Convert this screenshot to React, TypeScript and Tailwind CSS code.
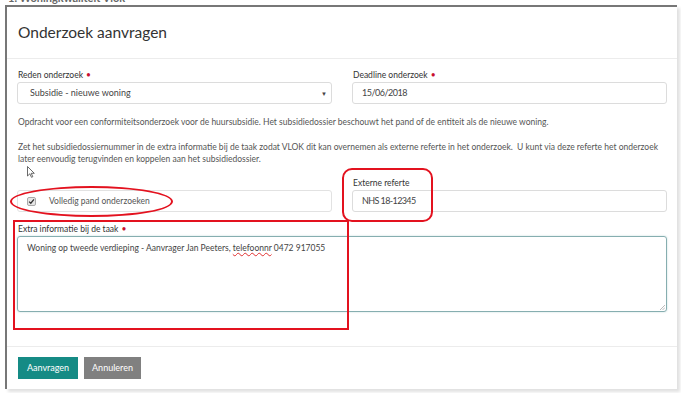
import React from "react";

const Req = () => <span className="ml-[3px] text-[#c8102e]">•</span>;

const App = () => {
  return (
    <div className="relative h-[393px] w-[681px] overflow-hidden bg-white font-['Lato',sans-serif] text-[#333]">
      {/* page behind the modal, mostly hidden */}
      <div className="h-[5px] overflow-hidden pl-[8px]">
        <div className="-mt-[8px] text-[11px] font-bold leading-[12px] text-[#666]">1. Woningkwaliteit Vlok</div>
      </div>

      <div className="ml-[5px] flex h-[384px] w-[672px] flex-col border-l-2 border-t-2 border-[#777] bg-white shadow-[3px_3px_3px_rgba(0,0,0,0.12)]">
        {/* Header */}
        <div className="flex h-[52px] items-center border-b border-[#ececec] pl-[11px]">
          <h2 className="text-[15.5px] text-[#333]">Onderzoek aanvragen</h2>
        </div>

        {/* Body */}
        <div className="flex flex-col px-[10px] pt-[10px]">
          <div className="grid grid-cols-2 gap-x-[20px]">
            <div className="flex flex-col">
              <label className="pl-[1px] text-[8.5px] leading-[12px] text-[#333]">
                Reden onderzoek<Req />
              </label>
              <div className="mt-[1px] flex h-[22px] items-center justify-between rounded-[3px] border border-[#dcdcdc] pl-[12px] pr-[4px] text-[9px] text-[#444]">
                <span>Subsidie - nieuwe woning</span>
                <span className="text-[6px] text-[#444]">▼</span>
              </div>
            </div>
            <div className="flex flex-col">
              <label className="pl-[1px] text-[8.5px] leading-[12px] text-[#333]">
                Deadline onderzoek<Req />
              </label>
              <div className="mt-[1px] flex h-[22px] items-center rounded-[3px] border border-[#dcdcdc] pl-[9px] text-[9px] tracking-[-0.5px] text-[#444]">
                15/06/2018
              </div>
            </div>
          </div>

          <p className="mt-[12px] whitespace-nowrap pl-[1px] text-[8.5px] leading-[12px] text-[#555]">
            Opdracht voor een conformiteitsonderzoek voor de huursubsidie. Het subsidiedossier beschouwt het pand of de entiteit als de nieuwe woning.
          </p>
          <p className="mt-[13px] whitespace-nowrap pl-[1px] text-[8.5px] leading-[12px] text-[#555]">
            Zet het subsidiedossiernummer in de extra informatie bij de taak zodat VLOK dit kan overnemen als externe referte in het onderzoek.&nbsp; U kunt via deze referte het onderzoek
            <br />
            later eenvoudig terugvinden en koppelen aan het subsidiedossier.
          </p>

          <div className="mt-[12px] grid grid-cols-2 gap-x-[20px]">
            <div className="flex flex-col justify-end">
              <div className="flex h-[22px] items-center rounded-[3px] border border-[#e2e2e2] pl-[9px] text-[8.5px] text-[#555]">
                <span className="flex h-[9px] w-[9px] items-center justify-center rounded-[2px] border border-[#aaa] bg-[#e6e6e6]">
                  <svg viewBox="0 0 10 10" className="h-[7px] w-[7px]">
                    <path d="M1.5 5.2 L4 7.5 L8.5 2" fill="none" stroke="#333" strokeWidth="1.8" />
                  </svg>
                </span>
                <span className="ml-[13px]">Volledig pand onderzoeken</span>
              </div>
            </div>
            <div className="flex flex-col">
              <label className="pl-[1px] text-[8.5px] leading-[12px] text-[#333]">Externe referte</label>
              <div className="mt-[1px] flex h-[22px] items-center rounded-[3px] border border-[#dcdcdc] pl-[9px] text-[9px] tracking-[-0.6px] text-[#444]">
                NHS 18-12345
              </div>
            </div>
          </div>

          <label className="mt-[11px] pl-[1px] text-[8.5px] leading-[12px] text-[#333]">
            Extra informatie bij de taak<Req />
          </label>
          <div className="relative mt-[1px] h-[76px] rounded-[3px] border border-[#86aeb0] pl-[9px] pt-[5px] text-[8.5px] text-[#444] shadow-[0_0_2px_rgba(100,160,160,0.4)]">
            Woning op tweede verdieping - Aanvrager Jan Peeters,{" "}
            <span className="underline decoration-[#e03030] decoration-wavy decoration-[1px]">telefoonnr</span> 0472 917055
            <svg viewBox="0 0 6 6" className="absolute bottom-[1px] right-[1px] h-[6px] w-[6px]">
              <path d="M1 6 L6 1 M3.5 6 L6 3.5" stroke="#aaa" strokeWidth="0.8" />
            </svg>
          </div>
        </div>

        {/* Footer */}
        <div className="mt-auto flex h-[43px] items-start gap-[6px] border-t border-[#ececec] pl-[11px] pt-[10px]">
          <button className="h-[22px] w-[60px] bg-[#158b85] text-[9px] text-white">Aanvragen</button>
          <button className="h-[22px] w-[57px] bg-[#808080] text-[9px] text-white">Annuleren</button>
        </div>
      </div>

      {/* mouse cursor */}
      <svg viewBox="0 0 8 12" className="absolute left-[27px] top-[166px] h-[12px] w-[8px]">
        <path d="M0.5 0.5 L0.5 10 L2.8 7.8 L4.5 11.3 L5.8 10.7 L4.2 7.3 L7.3 7.3 Z" fill="#fff" stroke="#444" strokeWidth="0.8" />
      </svg>

      {/* red annotations */}
      <div className="absolute left-[10px] top-[186px] h-[31px] w-[163px] rounded-[50%] border-2 border-[#e3121f]" />
      <div className="absolute left-[342px] top-[168px] h-[54px] w-[91px] rounded-[10px] border-2 border-[#e3121f]" />
      <div className="absolute left-[13px] top-[220px] h-[110px] w-[336px] border-2 border-[#e3121f]" />
    </div>
  );
};

export default App;
